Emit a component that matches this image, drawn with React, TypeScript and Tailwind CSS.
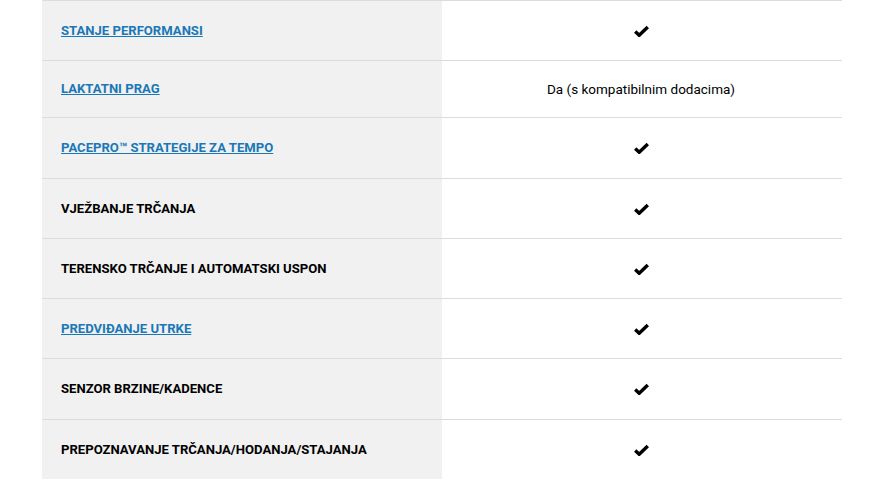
interface Row {
  label: string;
  link: boolean;
  value: string | null;
  h: string;
}

const ROWS: Row[] = [
  { label: "STANJE PERFORMANSI", link: true, value: null, h: "h-[60px]" },
  { label: "LAKTATNI PRAG", link: true, value: "Da (s kompatibilnim dodacima)", h: "h-[57px]" },
  { label: "PACEPRO™ STRATEGIJE ZA TEMPO", link: true, value: null, h: "h-[61px]" },
  { label: "VJEŽBANJE TRČANJA", link: false, value: null, h: "h-[60px]" },
  { label: "TERENSKO TRČANJE I AUTOMATSKI USPON", link: false, value: null, h: "h-[60px]" },
  { label: "PREDVIĐANJE UTRKE", link: true, value: null, h: "h-[60px]" },
  { label: "SENZOR BRZINE/KADENCE", link: false, value: null, h: "h-[61px]" },
  { label: "PREPOZNAVANJE TRČANJA/HODANJA/STAJANJA", link: false, value: null, h: "h-[60px]" },
];

function Check() {
  return (
    <svg width="15" height="12" viewBox="0 0 15 12" className="ml-[-1px]">
      <path d="M1.2 6.6 L5.2 10.3 L13.8 2" fill="none" stroke="#000" strokeWidth="3.4" strokeLinejoin="miter" />
    </svg>
  );
}

export default function App() {
  return (
    <div className="w-[872px] h-[497px] bg-white font-['Roboto',sans-serif] text-black">
      <div className="ml-[42px] w-[800px] flex flex-col">
        {ROWS.map((row, i) => (
          <div key={i} className={`flex border-t border-[#dcdcdc] ${row.h}`}>
            <div className="w-[400px] bg-[#f1f1f1] flex items-center pl-[19px]">
              {row.link ? (
                <a href="#" className="text-[13.1px] font-bold text-[#1a78b7] underline">
                  {row.label}
                </a>
              ) : (
                <span className="text-[13.1px] font-bold">{row.label}</span>
              )}
            </div>
            <div className="w-[400px] flex items-center justify-center">
              {row.value ? (
                <span className="text-[13.5px] pr-[2px]">{row.value}</span>
              ) : (
                <Check />
              )}
            </div>
          </div>
        ))}
      </div>
    </div>
  );
}
